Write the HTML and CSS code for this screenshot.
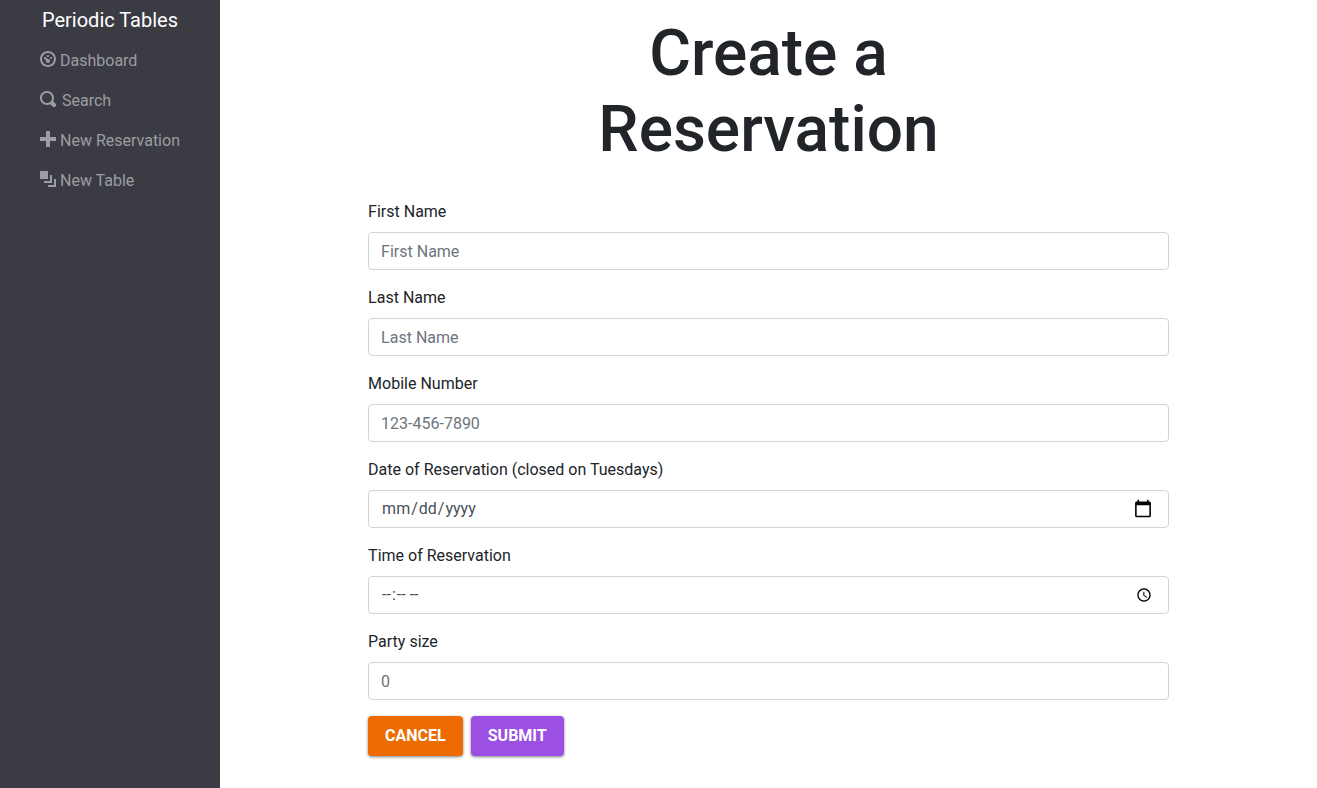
FILE: index.html
```html
<!DOCTYPE html>
<html lang="en">
<head>
<meta charset="utf-8">
<title>Periodic Tables</title>
<link rel="stylesheet" href="styles.css">
</head>
<body>
<div class="layout">
  <nav class="sidebar">
    <a class="brand" href="#">Periodic Tables</a>
    <ul class="menu">
      <li><a class="menu-link" href="#"><svg class="icon" viewBox="0 0 8 8" aria-hidden="true"><path d="M4 0c-2.2 0-4 1.8-4 4s1.8 4 4 4 4-1.8 4-4-1.8-4-4-4zm0 1c1.66 0 3 1.34 3 3s-1.34 3-3 3-3-1.34-3-3 1.34-3 3-3zm0 1c-.28 0-.5.22-.5.5s.22.5.5.5.5-.22.5-.5-.22-.5-.5-.5zm-1.66 1a.5.5 0 0 0-.19.84l.91.91c-.02.08-.06.16-.06.25 0 .55.45 1 1 1s1-.45 1-1-.45-1-1-1c-.09 0-.17.04-.25.06l-.91-.91a.5.5 0 0 0-.44-.16.5.5 0 0 0-.06 0zm3.16 0c-.28 0-.5.22-.5.5s.22.5.5.5.5-.22.5-.5-.22-.5-.5-.5z"/></svg>Dashboard</a></li>
      <li><a class="menu-link menu-link-search" href="#"><svg class="icon" viewBox="0 0 8 8" aria-hidden="true"><path d="M3.5 0c-1.93 0-3.5 1.57-3.5 3.5s1.57 3.5 3.5 3.5c.59 0 1.17-.14 1.66-.41a1 1 0 0 0 .13.13l1 1a1.02 1.02 0 1 0 1.44-1.44l-1-1a1 1 0 0 0-.16-.13c.27-.49.44-1.06.44-1.66 0-1.93-1.55-3.5-3.5-3.5zm0 1c1.39 0 2.5 1.11 2.5 2.5 0 .66-.24 1.27-.66 1.72l-.03.03a1 1 0 0 0-.13.13c-.44.4-1.04.63-1.69.63-1.39 0-2.5-1.11-2.5-2.5s1.11-2.5 2.5-2.5z"/></svg>Search</a></li>
      <li><a class="menu-link" href="#"><svg class="icon" viewBox="0 0 8 8" aria-hidden="true"><path d="M3 0v3h-3v2h3v3h2v-3h3v-2h-3v-3h-2z"/></svg>New Reservation</a></li>
      <li><a class="menu-link" href="#"><svg class="icon" viewBox="0 0 8 8" aria-hidden="true"><path d="M0 0v4h4v-4h-4zm5 2v3h-3v1h4v-4h-1zm2 2v3h-3v1h4v-4h-1z"/></svg>New Table</a></li>
    </ul>
  </nav>
  <main class="content">
    <h1 class="title">Create a Reservation</h1>
    <form class="form">
      <div class="field">
        <label for="first_name">First Name</label>
        <input class="control" id="first_name" type="text" placeholder="First Name">
      </div>
      <div class="field">
        <label for="last_name">Last Name</label>
        <input class="control" id="last_name" type="text" placeholder="Last Name">
      </div>
      <div class="field">
        <label for="mobile_number">Mobile Number</label>
        <input class="control" id="mobile_number" type="tel" placeholder="123-456-7890">
      </div>
      <div class="field">
        <label for="reservation_date">Date of Reservation (closed on Tuesdays)</label>
        <input class="control control-date" id="reservation_date" type="date">
      </div>
      <div class="field">
        <label for="reservation_time">Time of Reservation</label>
        <input class="control" id="reservation_time" type="time">
      </div>
      <div class="field">
        <label for="people">Party size</label>
        <input class="control" id="people" type="number" placeholder="0">
      </div>
      <div class="actions">
        <button class="btn btn-cancel" type="button">Cancel</button>
        <button class="btn btn-submit" type="submit">Submit</button>
      </div>
    </form>
  </main>
</div>
</body>
</html>
```
FILE: styles.css
```css
*, *::before, *::after { box-sizing: border-box; }

body {
  margin: 0;
  font-family: Roboto, "Liberation Sans", sans-serif;
  font-size: 16px;
  line-height: 24px;
  color: #212529;
  background: #fff;
}

.layout {
  display: flex;
  min-height: 100vh;
}

.sidebar {
  display: flex;
  flex-direction: column;
  flex: 0 0 220px;
  background: #3b3b44;
}

.brand {
  padding: 5px 0 6px;
  font-size: 20px;
  line-height: 30px;
  text-align: center;
  color: #fff;
  text-decoration: none;
}

.menu {
  margin: 0;
  padding: 0 0 0 40px;
  list-style: none;
}

.menu-link {
  display: flex;
  align-items: center;
  gap: 4px;
  padding: 8px 0;
  color: #9d9da1;
  text-decoration: none;
}

.menu-link-search { gap: 6px; }

.icon {
  width: 16px;
  height: 16px;
  margin-bottom: 4px;
  fill: currentColor;
}

.content {
  flex: 1;
  min-width: 0;
  padding: 16px 0 32px;
}

.title {
  max-width: 400px;
  margin: 0 auto 32px;
  font-size: 64px;
  font-weight: 500;
  line-height: 76px;
  text-align: center;
}

.form {
  width: 73%;
  margin: 0 auto;
}

.field {
  display: flex;
  flex-direction: column;
  gap: 8px;
  margin-bottom: 16px;
}

.control {
  width: 100%;
  height: 38px;
  padding: 6px 12px;
  font: inherit;
  color: #495057;
  background: #fff;
  border: 1px solid #ced4da;
  border-radius: 4px;
}

.control::placeholder {
  color: #6c757d;
  opacity: 1;
}

.control-date::-webkit-calendar-picker-indicator {
  width: 20px;
  height: 20px;
  margin-right: 3px;
  padding: 0;
  background-size: contain;
}

.actions {
  display: flex;
  gap: 8px;
}

.btn {
  padding: 8px 17px;
  font: inherit;
  font-weight: 700;
  text-transform: uppercase;
  color: #fff;
  border: 0;
  border-radius: 4px;
  box-shadow: 0 1px 3px rgba(0, 0, 0, 0.5);
}

.btn-cancel { background: #ed6c02; }
.btn-submit { background: #9b4fe3; }
```
